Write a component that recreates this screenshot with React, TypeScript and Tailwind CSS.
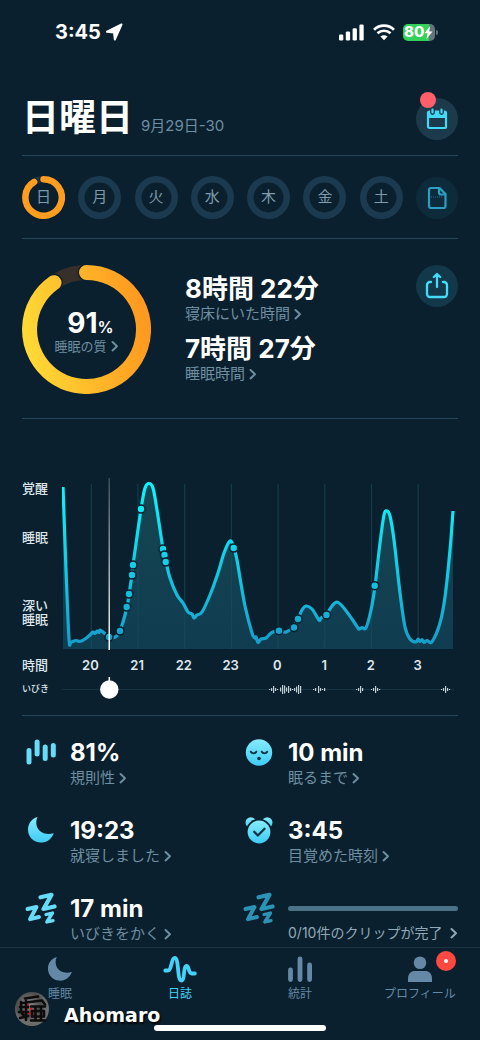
import React from 'react';

type Point = [number, number];

const DAYS = ['日', '月', '火', '水', '木', '金', '土'];
const HOURS = ['20', '21', '22', '23', '0', '1', '2', '3'];

const CURVE: Point[] = [
  [1, 17], [4, 100], [7, 169], [9, 172], [14, 170.5], [18, 171.5], [23, 169], [28, 165], [31, 162], [33, 163.5],
  [35, 161], [37, 162.5], [38, 160], [41, 162], [47, 167], [53, 167], [58, 161], [65, 137], [67, 124],
  [70, 105], [71, 95], [79, 39], [83, 18], [87, 13.5], [91, 18], [95, 40], [101, 79], [104, 92],
  [108, 108], [115, 125], [121, 133], [126, 142], [130, 144], [132, 148], [135, 145], [140, 142], [148, 125],
  [156, 103], [162, 83], [168, 71], [172, 78], [175, 90], [178, 108], [183, 136], [190, 163], [193, 168], [194, 167],
  [196, 172.5], [199, 169], [204, 168], [208, 164], [211, 162], [217, 160.7], [224, 162], [231, 157],
  [236, 149], [240, 140], [244, 136], [250, 139], [257, 150], [259, 148], [264, 145], [270, 136], [275, 132], [281, 137],
  [290, 149], [294, 155], [297, 159], [300, 157.5], [304, 157.7], [309, 140], [313, 116], [318, 73], [322, 45], [325, 41],
  [328, 46], [332, 70], [338, 123], [343, 157], [348, 169], [354, 172], [356, 169], [358, 171.5], [360, 169.5], [362, 172.5],
  [365, 170.5], [370, 171.7], [378, 153], [383, 127], [388, 80], [391, 41],
];

// Snore events marked on the curve
const EVENTS: Point[] = [
  [47, 167], [58, 161], [64.7, 137], [67, 124], [70, 105], [71, 95], [79, 39], [101, 79], [102.5, 85], [103.7, 92],
  [171.7, 78], [217, 160.7], [232, 157.5], [236, 149], [264.5, 145], [312.7, 115.7],
];

// [x, height] of each bar in the snore track
const SNORES: Point[] = [
  [207, 1], [209, 3], [211, 7], [213, 3], [215, 1], [218, 4], [220, 9], [222, 8], [224, 4], [226, 7], [228, 3], [230, 1],
  [232, 3], [234, 6], [236, 9], [238, 7],
  [251, 1], [253, 3], [256, 7], [258, 3], [260, 1], [262, 3],
  [294, 1], [296, 3], [298, 7], [300, 3],
  [309, 1], [311, 3], [313, 7], [315, 3], [317, 1],
  [379, 1], [381, 3], [383, 7], [385, 3], [387, 1],
];

const smooth = (pts: Point[]) => {
  let d = `M${pts[0][0]} ${pts[0][1]}`;
  for (let i = 0; i < pts.length - 1; i++) {
    const p0 = pts[i - 1] || pts[i];
    const p1 = pts[i];
    const p2 = pts[i + 1];
    const p3 = pts[i + 2] || p2;
    d += `C${p1[0] + (p2[0] - p0[0]) / 6} ${p1[1] + (p2[1] - p0[1]) / 6} ${p2[0] - (p3[0] - p1[0]) / 6} ${p2[1] - (p3[1] - p1[1]) / 6} ${p2[0]} ${p2[1]}`;
  }
  return d;
};

const Chevron = () => (
  <svg className="shrink-0" width="8" height="12" viewBox="0 0 8 12" fill="none" stroke="currentColor" strokeWidth="2" strokeLinecap="round" strokeLinejoin="round">
    <path d="M1.5 2 6 6.2 1.5 10.4" />
  </svg>
);

const StatusBar = () => (
  <div className="flex h-16 items-center justify-between pl-[55px] pr-[42px]">
    <div className="flex items-center gap-1">
      <span className="text-xl font-bold leading-6">3:45</span>
      <svg width="18" height="18" viewBox="0 0 18 18" fill="#fff" stroke="#fff" strokeWidth="2" strokeLinejoin="round">
        <path d="M16.500 1.500 2 8.700l7 .8.800 7Z" />
      </svg>
    </div>
    <div className="flex items-center gap-2">
      <svg width="26" height="17" viewBox="0 0 26 17" fill="#fff">
        <rect x="0" y="10.500" width="4.300" height="6" rx="1.300" />
        <rect x="6.800" y="7.500" width="4.300" height="9" rx="1.300" />
        <rect x="13.600" y="4.300" width="4.300" height="12.200" rx="1.300" />
        <rect x="20.400" y=".5" width="4.300" height="16" rx="1.300" />
      </svg>
      <svg width="22" height="17" viewBox="0 0 22 17" fill="none" stroke="#fff" strokeWidth="2.700">
        <path d="M1 5.700a14.500 14.500 0 0 1 20 0M4.500 9.300a9.500 9.500 0 0 1 13 0" />
        <path d="M11 16.300 7.400 12.600a5.200 5.200 0 0 1 7.200 0Z" fill="#fff" stroke="none" />
      </svg>
      <div className="flex items-center">
        <div className="flex h-[17px] w-8 items-center overflow-hidden rounded-[5px] bg-linear-to-r from-[#33d158] from-80% to-[#66747d] to-80% pl-px text-[15px] font-extrabold leading-4">
          80
          <svg width="9" height="13" viewBox="0 0 9 13" fill="#fff">
            <path d="M6 0 .5 7.200h3L2.500 13 8.500 5.400H5.300Z" />
          </svg>
        </div>
        <div className="ml-px h-[5px] w-[2px] rounded-r-full bg-[#66747d]" />
      </div>
    </div>
  </div>
);

const DayRing: React.FC<{ day: string; active: boolean }> = ({ day, active }) => (
  <button className="relative flex size-[43px] items-center justify-center pb-[2px] text-[15px] leading-5 text-[#7f9bab]">
    <svg className="absolute inset-0" viewBox="0 0 43 43" fill="none" strokeWidth="6.500">
      <circle cx="21.500" cy="21.500" r="18.200" stroke="#1b3a50" />
      {active && (
        <>
          <path d="M21.500 3.300a18.200 18.200 0 1 1-9.300 2.600" stroke="#0b202e" strokeWidth="8.500" strokeLinecap="round" />
          <path d="M21.500 3.300a18.200 18.200 0 1 1-9.300 2.600" stroke="#ff9d20" strokeLinecap="round" />
        </>
      )}
    </svg>
    <span className="relative">{day}</span>
  </button>
);

const QualityRing = () => (
  <div className="relative flex size-[129px] shrink-0 flex-col items-center justify-center">
    <svg className="absolute inset-0" viewBox="0 0 129 129" fill="none">
      <defs>
        <linearGradient id="quality" x1="0" y1=".6" x2="1" y2=".4">
          <stop offset="0" stopColor="#ffd835" />
          <stop offset=".55" stopColor="#ffb428" />
          <stop offset="1" stopColor="#ff9a20" />
        </linearGradient>
      </defs>
      <circle cx="64.500" cy="64.500" r="57" stroke="#372f29" strokeWidth="15" />
      <path d="M64.500 7.500A57 57 0 1 1 32 17.700" stroke="#0b202e" strokeWidth="18" strokeLinecap="round" />
      <path d="M64.500 7.500A57 57 0 1 1 32 17.700" stroke="url(#quality)" strokeWidth="15" strokeLinecap="round" />
    </svg>
    <div className="relative mt-1 flex items-baseline pl-2 leading-7">
      <span className="text-[28px] font-bold leading-7">91</span>
      <span className="text-base font-semibold leading-5">%</span>
    </div>
    <a href="#quality" className="relative flex items-center gap-1 text-[13px] leading-[18px] text-[#6e8ea1]">
      睡眠の質
      <Chevron />
    </a>
  </div>
);

const Stat: React.FC<{ icon: React.ReactNode; value: string; label: string }> = ({ icon, value, label }) => (
  <div className="flex h-[50px] gap-[10px]">
    <div className="flex h-7 w-[38px] shrink-0 items-center justify-center">{icon}</div>
    <div>
      <div className="text-2xl font-bold leading-[30px]">{value}</div>
      <a href="#stat" className="flex items-center gap-1 whitespace-nowrap text-[15px] leading-5 text-[#6e8ea1]">
        {label}
        <Chevron />
      </a>
    </div>
  </div>
);

const BarsIcon = () => (
  <svg width="32" height="28" viewBox="0 0 32 28" fill="none" stroke="#66dcf8" strokeWidth="5" strokeLinecap="round">
    <path d="M4 12.500v11.500M12.100 4v12M20.200 9v11.500M28.300 7.500v9.500" />
  </svg>
);

const MOON = 'M10.500 1C6.500 9.500 12.500 21 26.800 17.200 24 24.500 18 27 13 26.500 6 26 1 20.500 1 13.500 1 8 4.500 2.500 10.500 1Z';

const MoonIcon: React.FC<{ fill: string }> = ({ fill }) => (
  <svg width="28" height="28" viewBox="0 0 28 28" fill={fill}>
    <path d={MOON} />
  </svg>
);

const SnoreIcon: React.FC<{ color: string }> = ({ color }) => (
  <svg className="shrink-0" width="32" height="32" viewBox="0 0 32 32" fill="none" stroke={color} strokeLinecap="round" strokeLinejoin="round">
    <path strokeWidth="4.200" d="M15.500 5.300 26.500 2.800 18.500 17 29.500 14.500" />
    <path strokeWidth="3.900" d="M2.500 17 11.500 15 5 27.200 14 25" />
    <path strokeWidth="3.300" d="M21 22.500 27.500 21 21.800 30 28 28.700" />
  </svg>
);

const FaceIcon = () => (
  <svg width="28" height="28" viewBox="0 0 28 28" fill="none">
    <defs>
      <linearGradient id="ice" x1="0" y1="0" x2="0" y2="1">
        <stop offset="0" stopColor="#86ebfb" />
        <stop offset="1" stopColor="#3fccf5" />
      </linearGradient>
    </defs>
    <circle cx="14" cy="14.500" r="13.200" fill="url(#ice)" />
    <path d="M5.800 13.700c1.200 2.200 4.300 2.200 5.500 0M16.700 13.700c1.200 2.200 4.300 2.200 5.500 0" stroke="#0b3446" strokeWidth="1.900" strokeLinecap="round" />
    <circle cx="14" cy="20.500" r="1.800" fill="#0b3446" />
  </svg>
);

const AlarmIcon = () => (
  <svg width="28" height="28" viewBox="0 0 28 28" fill="none">
    <circle cx="5.800" cy="6.500" r="5.300" fill="url(#ice)" />
    <circle cx="22.200" cy="6.500" r="5.300" fill="url(#ice)" />
    <circle cx="14" cy="16" r="13.200" fill="#0b202e" />
    <circle cx="14" cy="16" r="11.400" fill="url(#ice)" />
    <path d="m9.200 15.800 3.700 3.700 6.600-6.700" stroke="#0b3446" strokeWidth="2.300" strokeLinecap="round" strokeLinejoin="round" />
  </svg>
);

const SleepChart = () => {
  const line = smooth(CURVE);
  return (
    <section className="grid grid-cols-[40px_1fr] border-b border-[#25455a] pb-[17px] pt-[51px]">
      <div className="flex flex-col whitespace-nowrap pt-[11px] text-[13px] font-medium leading-[14px] text-[#dfe7ec]">
        <span>覚醒</span>
        <span className="mt-[35px]">睡眠</span>
        <span className="mt-[54px]">深い<br />睡眠</span>
      </div>
      <svg className="w-full" viewBox="0 0 396 180" fill="none">
        <defs>
          <linearGradient id="curve" gradientUnits="userSpaceOnUse" x1="0" y1="14" x2="0" y2="172">
            <stop offset="0" stopColor="#0bf6ff" />
            <stop offset=".5" stopColor="#10cfe8" />
            <stop offset="1" stopColor="#169fcb" />
          </linearGradient>
          <linearGradient id="area" x1="0" y1="0" x2="0" y2="1">
            <stop offset="0" stopColor="#154651" />
            <stop offset="1" stopColor="#103c50" />
          </linearGradient>
          <linearGradient id="cursor" gradientUnits="userSpaceOnUse" x1="0" y1="8" x2="0" y2="180">
            <stop offset="0" stopColor="#fff" stopOpacity=".2" />
            <stop offset="1" stopColor="#fff" />
          </linearGradient>
        </defs>
        <path d={`${line}V179H1Z`} fill="url(#area)" />
        {HOURS.map((h, i) => (
          <line key={h} x1={29.3 + i * 46.7} x2={29.3 + i * 46.7} y1="14" y2="179" stroke="#17505f" strokeOpacity=".6" strokeWidth="1.200" />
        ))}
        <path d={line} stroke="url(#curve)" strokeWidth="3.200" strokeLinejoin="round" />
        {EVENTS.map(([x, y]) => (
          <circle key={`${x}-${y}`} cx={x} cy={y} r="4" fill="url(#curve)" stroke="#0b202e" strokeWidth="1.600" />
        ))}
        <rect x="46.500" y="8" width="1.500" height="172" fill="url(#cursor)" />
      </svg>
      <span className="whitespace-nowrap text-[13px] font-medium leading-[30px] text-[#dfe7ec]">時間</span>
      <div className="ml-[5px] mr-[17px] grid grid-cols-8 text-center text-[13px] font-semibold leading-[30px] text-[#dfe7ec]">
        {HOURS.map((h) => <span key={h}>{h}</span>)}
      </div>
      <span className="whitespace-nowrap text-[9px] font-medium leading-[18px] text-[#dfe7ec]">いびき</span>
      <svg className="w-full overflow-visible" viewBox="0 0 396 18">
        <path d="M0 9.500h392" stroke="#143444" />
        {SNORES.map(([x, h]) => (
          <rect key={x} x={x} y={9.5 - h / 2} width="1.200" height={h} fill="#c3d0d6" />
        ))}
        <path d="M47.300-3v6" stroke="#fff" strokeWidth="1.500" />
        <circle cx="47.300" cy="9.500" r="9.200" fill="#fff" />
      </svg>
    </section>
  );
};

const NavItem: React.FC<{ label: string; active?: boolean; children: React.ReactNode }> = ({ label, active, children }) => (
  <a href="#nav" className={`flex flex-col items-center whitespace-nowrap text-xs leading-5 ${active ? 'text-[#43d3fa]' : 'text-[#6488a5]'}`}>
    <div className="relative flex h-[30px] items-center">{children}</div>
    {label}
  </a>
);

const BottomNav = () => (
  <nav className="relative border-t border-[#1a3342] bg-[#0b202e] pt-[6px]">
    <div className="grid grid-cols-4">
      <NavItem label="睡眠">
        <svg width="26" height="26" viewBox="0 0 28 28" fill="currentColor"><path d={MOON} /></svg>
      </NavItem>
      <NavItem label="日誌" active>
        <svg width="34" height="28" viewBox="0 0 34 28" fill="none" stroke="currentColor" strokeWidth="3.800" strokeLinecap="round" strokeLinejoin="round">
          <path d="M2.300 15.500h2.500C9 15.500 8 3 11.700 3c4.500 0 2.300 22.500 6.600 22.500 3.800 0 1.700-14.500 5.300-14.500 2.700 0 1.500 7.500 5.200 7.500h3" />
        </svg>
      </NavItem>
      <NavItem label="統計">
        <svg width="26" height="28" viewBox="0 0 26 28" fill="none" stroke="currentColor" strokeWidth="4.800" strokeLinecap="round">
          <path d="M3.500 15v9.500M13 4v20.500M22.600 10v14.500" />
        </svg>
      </NavItem>
      <NavItem label="プロフィール">
        <svg width="26" height="28" viewBox="0 0 26 28" fill="currentColor">
          <circle cx="13" cy="7.700" r="6.300" />
          <path d="M1 27v-3.500c0-5 3-7.500 7-7.500h10c4 0 7 2.500 7 7.500V27Z" />
        </svg>
        <span className="absolute -right-[23px] -top-[3px] flex size-[20px] items-center justify-center rounded-full bg-[#ff4840]">
          <span className="size-1 rounded-full bg-white" />
        </span>
      </NavItem>
    </div>
    <div className="flex h-9 items-end justify-center pb-[9px]">
      <div className="h-[6px] w-[36%] rounded-full bg-white" />
    </div>
    <div className="absolute bottom-[13px] left-[14px] flex items-center gap-[14px]">
      <svg width="36" height="36" viewBox="0 0 36 36" fill="none">
        <defs>
          <radialGradient id="badge" cx=".4" cy=".35">
            <stop offset="0" stopColor="#8a8a8a" />
            <stop offset=".7" stopColor="#4c4c4c" />
            <stop offset="1" stopColor="#6d6d6d" />
          </radialGradient>
        </defs>
        <circle cx="18" cy="18" r="17" fill="url(#badge)" />
        <path d="M14 13v5M17 17v9M12 22h6M22 20v7M27 20v7" stroke="#d0202e" strokeWidth="2" />
        <g stroke="#0d0b0c" strokeWidth="2.600" strokeLinecap="round" strokeLinejoin="round">
          <path d="M11 7.500 24 5.500M8 12l20-2.500 3 4M6 16h8M7 11v9M12 10v8M5 21h9M7 21l3 4M12 20v9M6 27l8-2" />
          <path d="M17 15.500h14M17 29.500h14M21.500 16v13M27 16v13M18 20h12v5.500H18Z" />
        </g>
      </svg>
      <span className="mt-3 font-['DejaVu_Sans'] text-[19px] font-bold leading-6 text-shadow-[1px_2px_2px_#000]">Ahomaro</span>
    </div>
  </nav>
);

const App: React.FC = () => {
  return (
    <div className="flex min-h-screen flex-col bg-[#0b202e] font-[Inter,'Noto_Sans_CJK_JP',sans-serif] text-white">
      <StatusBar />
      <main className="flex-1 px-[22px]">
        <header className="flex items-center justify-between border-b border-[#25455a] pb-[15px] pt-[34px]">
          <div className="flex h-[42px] items-baseline gap-2 whitespace-nowrap">
            <h1 className="text-[37px] font-bold leading-[40px]">日曜日</h1>
            <span className="text-[15px] text-[#6e8ea1]">9月29日-30</span>
          </div>
          <button aria-label="カレンダー" className="relative flex size-[42px] items-center justify-center rounded-full bg-[#1c3a4b]">
            <svg width="22" height="22" viewBox="0 0 22 22" fill="none">
              <rect x="2" y="3.500" width="18" height="16.500" rx="1.500" stroke="#43d8f5" strokeWidth="2.200" />
              <path d="M2 4h18v6H2Z" fill="#43d8f5" />
              <path d="M6.500 0v4.500M15.500 0v4.500" stroke="#1c3a4b" strokeWidth="4.800" strokeLinecap="round" />
              <path d="M6.500 1.500v3M15.500 1.500v3" stroke="#43d8f5" strokeWidth="2.200" strokeLinecap="round" />
            </svg>
            <span className="absolute -top-[6px] left-[4px] size-4 rounded-full bg-[#ff5f6b]" />
          </button>
        </header>

        <div className="flex items-center justify-between border-b border-[#25455a] pb-[19px] pt-5">
          {DAYS.map((day, i) => <DayRing key={day} day={day} active={i === 0} />)}
          <button aria-label="メモ" className="flex size-[42px] items-center justify-center rounded-full bg-[#0e2b3b]">
            <svg width="20" height="24" viewBox="0 0 20 24" fill="none" stroke="#2b9fc2" strokeWidth="2.200" strokeLinejoin="round">
              <path d="M4 2h8.500L18.500 8v12a2 2 0 0 1-2 2H4a2 2 0 0 1-2-2V4a2 2 0 0 1 2-2ZM12 2v4.500a2 2 0 0 0 2 2h4.500" />
              <path d="M4 11h12" strokeWidth="1" strokeDasharray="1 1" opacity=".6" />
            </svg>
          </button>
        </div>

        <section className="flex border-b border-[#25455a] pb-6 pt-[26px]">
          <QualityRing />
          <div className="ml-[34px] flex flex-1 flex-col whitespace-nowrap pt-[10px]">
            <div className="text-[26px] font-bold leading-7">8時間 22分</div>
            <a href="#bed" className="flex items-center gap-1 text-[15px] leading-[22px] text-[#6e8ea1]">寝床にいた時間<Chevron /></a>
            <div className="mt-[10px] text-[26px] font-bold leading-7">7時間 27分</div>
            <a href="#asleep" className="flex items-center gap-1 text-[15px] leading-[22px] text-[#6e8ea1]">睡眠時間<Chevron /></a>
          </div>
          <button aria-label="共有" className="flex size-[42px] items-center justify-center rounded-full bg-[#12384a]">
            <svg width="24" height="28" viewBox="0 0 24 28" fill="none" stroke="#43dcfa" strokeWidth="2.300" strokeLinecap="round" strokeLinejoin="round">
              <path d="M6 10H5a3 3 0 0 0-3 3v9a3 3 0 0 0 3 3h14a3 3 0 0 0 3-3v-9a3 3 0 0 0-3-3h-1M12 15V2.500M8.800 5 12 2l3.200 3" />
            </svg>
          </button>
        </section>

        <SleepChart />

        <section className="grid grid-cols-2 gap-y-7 pt-[22px]">
          <Stat icon={<BarsIcon />} value="81%" label="規則性" />
          <Stat icon={<FaceIcon />} value="10 min" label="眠るまで" />
          <Stat icon={<MoonIcon fill="url(#ice)" />} value="19:23" label="就寝しました" />
          <Stat icon={<AlarmIcon />} value="3:45" label="目覚めた時刻" />
          <Stat icon={<SnoreIcon color="#66dcf8" />} value="17 min" label="いびきをかく" />
          <div className="flex h-[50px] gap-[10px]">
            <div className="flex h-7 w-[38px] shrink-0 items-center justify-center"><SnoreIcon color="#2b93b6" /></div>
            <div className="flex-1">
              <div className="flex h-7 items-center">
                <div className="h-[5px] w-full rounded-full bg-[#4a7388]" />
              </div>
              <a href="#clips" className="flex items-center justify-between whitespace-nowrap text-sm leading-[22px] text-[#8fa9b7]">
                0/10件のクリップが完了
                <Chevron />
              </a>
            </div>
          </div>
        </section>
      </main>
      <BottomNav />
    </div>
  );
};

export default App;
